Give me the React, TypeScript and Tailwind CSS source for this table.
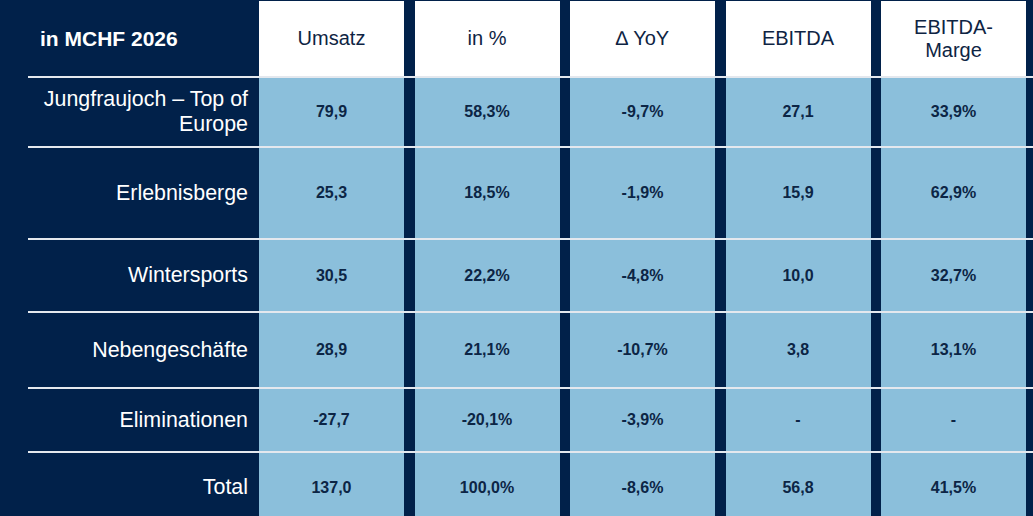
const columns = [
  { key: 'umsatz', label: ['Umsatz'] },
  { key: 'anteil', label: ['in %'] },
  { key: 'yoy', label: ['\u2206 YoY'] },
  { key: 'ebitda', label: ['EBITDA'] },
  { key: 'marge', label: ['EBITDA-', 'Marge'] },
];

const rows = [
  { label: ['Jungfraujoch \u2013 Top of', 'Europe'], height: 'h-[68px]', values: ['79,9', '58,3%', '-9,7%', '27,1', '33,9%'] },
  { label: ['Erlebnisberge'], height: 'h-[90px]', values: ['25,3', '18,5%', '-1,9%', '15,9', '62,9%'] },
  { label: ['Wintersports'], height: 'h-[71px]', values: ['30,5', '22,2%', '-4,8%', '10,0', '32,7%'] },
  { label: ['Nebengeschäfte'], height: 'h-[74px]', values: ['28,9', '21,1%', '-10,7%', '3,8', '13,1%'] },
  { label: ['Eliminationen'], height: 'h-[62px]', values: ['-27,7', '-20,1%', '-3,9%', '-', '-'] },
  { label: ['Total'], height: 'h-[63px] pt-[6px]', values: ['137,0', '100,0%', '-8,6%', '56,8', '41,5%'] },
];

export default function App() {
  return (
    <div
      className="w-[1033px] h-[516px] overflow-hidden bg-[#01214a]"
      style={{ fontFamily: '"Liberation Sans", Arial, sans-serif' }}
    >
      {/* Header */}
      <div className="flex h-[78px] pt-[1px] border-b-2 border-[#e4e8ee] ml-[28px]">
        <div className="w-[231px] flex items-center pl-[12px] text-white font-bold text-[21px]">
          in MCHF 2026
        </div>
        <div className="flex gap-[10.5px]">
          {columns.map((col) => (
            <div
              key={col.key}
              className="w-[145px] bg-white flex flex-col items-center justify-center text-center text-[20px] leading-[23px] text-[#0e2443]"
            >
              {col.label.map((line) => (
                <span key={line}>{line}</span>
              ))}
            </div>
          ))}
        </div>
      </div>

      {/* Body rows */}
      {rows.map((row, i) => (
        <div
          key={row.label[0]}
          className={`flex ml-[28px] ${i < rows.length - 1 ? 'border-b-2 border-[#e4e8ee]' : ''}`}
        >
          <div
            className={`w-[231px] ${row.height} flex flex-col items-end justify-center pr-[11px] text-right text-white text-[21.4px] leading-[25px]`}
          >
            {row.label.map((line) => (
              <span key={line}>{line}</span>
            ))}
          </div>
          <div className="flex gap-[10.5px]">
            {row.values.map((v, j) => (
              <div
                key={columns[j].key}
                className={`w-[145px] ${row.height} bg-[#8bbfdb] flex items-center justify-center font-bold text-[16px] text-[#0c2545]`}
              >
                {v}
              </div>
            ))}
          </div>
        </div>
      ))}
    </div>
  );
}
